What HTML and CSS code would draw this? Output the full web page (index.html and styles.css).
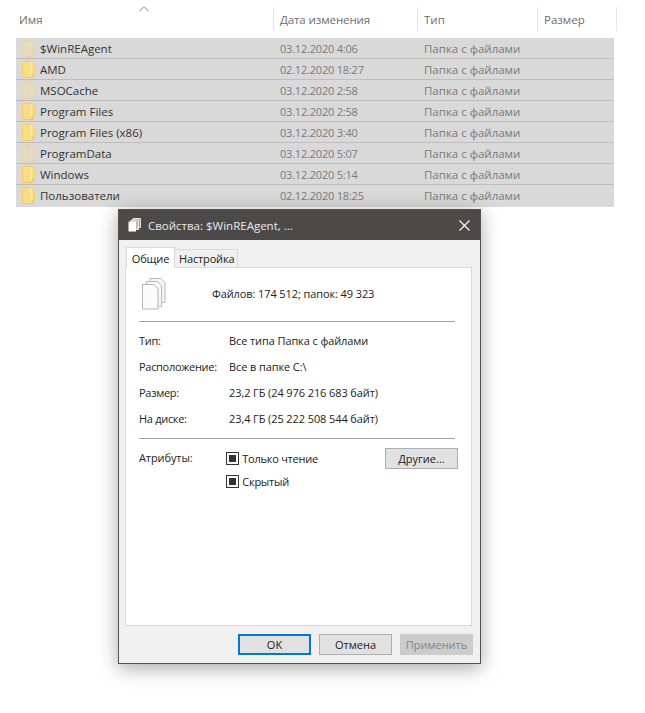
FILE: index.html
```html
<!DOCTYPE html>
<html lang="ru">
<head>
<meta charset="utf-8">
<title>Свойства</title>
<link rel="stylesheet" href="styles.css">
</head>
<body>
<svg class="defs" width="0" height="0" aria-hidden="true">
  <symbol id="folder" viewBox="0 0 13 17">
    <path d="M.5.5h8.500l3.500 2V12l-2 1v3.500H.5z" fill="#fcdc80" stroke="#eccd72"/>
    <path d="M9 .5V13" stroke="#fff0b8" fill="none"/>
    <path d="M10.500 13l2-1v4.500h-2z" fill="#f2cd6a"/>
  </symbol>
</svg>
<main class="explorer">
  <header class="col-head">
    <div class="h-name">Имя
      <svg class="sort" width="10" height="6" viewBox="0 0 10 6"><path d="M.5 5 5 .8 9.500 5" fill="none" stroke="#8a8a8a"/></svg>
    </div>
    <div class="h-date">Дата изменения</div>
    <div class="h-type">Тип</div>
    <div class="h-size">Размер</div>
  </header>
  <div class="rows">
    <div class="row faded"><svg class="ficon"><use href="#folder"/></svg><span class="n">$WinREAgent</span><span class="d">03.12.2020 4:06</span><span class="t">Папка с файлами</span></div>
    <div class="row"><svg class="ficon"><use href="#folder"/></svg><span class="n">AMD</span><span class="d">02.12.2020 18:27</span><span class="t">Папка с файлами</span></div>
    <div class="row faded"><svg class="ficon"><use href="#folder"/></svg><span class="n">MSOCache</span><span class="d">03.12.2020 2:58</span><span class="t">Папка с файлами</span></div>
    <div class="row"><svg class="ficon"><use href="#folder"/></svg><span class="n">Program Files</span><span class="d">03.12.2020 2:58</span><span class="t">Папка с файлами</span></div>
    <div class="row"><svg class="ficon"><use href="#folder"/></svg><span class="n">Program Files (x86)</span><span class="d">03.12.2020 3:40</span><span class="t">Папка с файлами</span></div>
    <div class="row faded"><svg class="ficon"><use href="#folder"/></svg><span class="n">ProgramData</span><span class="d">03.12.2020 5:07</span><span class="t">Папка с файлами</span></div>
    <div class="row"><svg class="ficon"><use href="#folder"/></svg><span class="n">Windows</span><span class="d">03.12.2020 5:14</span><span class="t">Папка с файлами</span></div>
    <div class="row"><svg class="ficon"><use href="#folder"/></svg><span class="n">Пользователи</span><span class="d">02.12.2020 18:25</span><span class="t">Папка с файлами</span></div>
  </div>
</main>

<section class="dialog">
  <div class="titlebar">
    <svg class="ticon" width="13" height="14" viewBox="0 0 13 14">
      <path d="M5 .5h7.500v9H5z" fill="#9a9896" stroke="#e8e8e8"/>
      <path d="M3 2h7.500v9.500H3z" fill="#bdbcbb" stroke="#e8e8e8"/>
      <path d="M.5 3.500h7.500v10H.5z" fill="#fff"/>
    </svg>
    <span class="ttext">Свойства: $WinREAgent, ...</span>
    <svg class="close" width="11" height="11" viewBox="0 0 11 11"><path d="M.5.5l10 10M10.500.5l-10 10" stroke="#fff" stroke-width="1.1"/></svg>
  </div>
  <div class="dbody">
    <div class="tabs">
      <div class="tab active">Общие</div>
      <div class="tab">Настройка</div>
    </div>
    <div class="panel">
      <div class="summary">
        <svg class="bigicon" width="24" height="32" viewBox="0 0 24 32">
          <path d="M8 .5h11l4 4v20H8z" fill="#f4f4f4" stroke="#bbb"/>
          <path d="M4.500 3.500h11l4 4v21h-15z" fill="#f6f6f6" stroke="#bbb"/>
          <path d="M.5 6.500h11l4.500 4.500v20H.5z" fill="#fbfbfb" stroke="#b5b5b5"/>
        </svg>
        <span class="count">Файлов: 174 512; папок: 49 323</span>
      </div>
      <hr class="rule">
      <dl class="props">
        <div class="prop"><dt>Тип:</dt><dd>Все типа Папка с файлами</dd></div>
        <div class="prop"><dt>Расположение:</dt><dd>Все в папке C:\</dd></div>
        <div class="prop"><dt>Размер:</dt><dd>23,2 ГБ (24 976 216 683 байт)</dd></div>
        <div class="prop"><dt>На диске:</dt><dd>23,4 ГБ (25 222 508 544 байт)</dd></div>
      </dl>
      <hr class="rule rule2">
      <div class="attrs">
        <div class="attr-label">Атрибуты:</div>
        <div class="checks">
          <label class="check"><span class="box"></span>Только чтение</label>
          <label class="check"><span class="box"></span>Скрытый</label>
        </div>
        <button class="btn other">Другие...</button>
      </div>
    </div>
    <div class="actions">
      <button class="btn ok">OK</button>
      <button class="btn">Отмена</button>
      <button class="btn disabled">Применить</button>
    </div>
  </div>
</section>
</body>
</html>
```
FILE: styles.css
```css
* { box-sizing: border-box; }
html, body { margin: 0; padding: 0; }
body {
  width: 645px;
  height: 713px;
  background: #fff;
  font-family: "Open Sans", "Noto Sans", sans-serif;
  font-size: 11.5px;
  color: #222;
  position: relative;
  overflow: hidden;
}
.defs { position: absolute; }
.explorer { padding: 7px 0 0 16px; }
.col-head {
  display: flex;
  height: 24px;
  color: #6d6d6d;
  font-size: 11.5px;
}
.col-head > div {
  display: flex;
  align-items: center;
  padding-left: 6px;
  border-right: 1px solid #e4e6e8;
  height: 24px;
  position: relative;
}
.h-name { width: 258px; padding-left: 3px !important; }
.h-date { width: 144px; letter-spacing: -.1px; }
.h-type { width: 120px; }
.h-size { width: 79px; }
.sort { position: absolute; left: 123px; top: -1px; }
.rows { margin-top: 7px; width: 598px; }
.row {
  display: flex;
  align-items: center;
  height: 21px;
  background: #d9d9d9;
  border-bottom: 1px solid #bdbdbd;
  color: #7a7a7a;
  font-size: 11.5px;
}
.row:last-child { height: 22px; border-bottom: 0; padding-bottom: 1px; }
.ficon { width: 13px; height: 17px; margin-left: 6px; flex: none; }
.row.faded .ficon { opacity: .35; }
.n { width: 240px; margin-left: 5px; color: #333; }
.d { width: 144px; font-size: 11px; letter-spacing: -.2px; }
.t { width: 190px; }

.dialog {
  position: absolute;
  left: 118px;
  top: 209px;
  width: 363px;
  height: 455px;
  background: #f0f0f0;
  border: 1px solid #55534f;
  box-shadow: 0 4px 18px rgba(0,0,0,.35);
  display: flex;
  flex-direction: column;
}
.titlebar {
  height: 30px;
  flex: none;
  background: #4c4a48;
  color: #e8e8e8;
  display: flex;
  align-items: center;
  padding: 0 10px;
  font-size: 11.5px;
}
.ticon { margin-right: 7px; margin-left: -1px; }
.ttext { flex: 1; }
.dbody { flex: 1; display: flex; flex-direction: column; padding: 6px 8px 0 6px; position: relative; }
.tabs { display: flex; height: 21px; padding-left: 1px; align-items: flex-end; position: relative; z-index: 1; }
.tab {
  height: 18px;
  padding: 0 4px;
  width: 63px;
  border: 1px solid #d9d9d9;
  border-bottom: 0;
  border-left: 0;
  background: #f0f0f0;
  font-size: 11px;
  display: flex;
  align-items: center;
  letter-spacing: -.15px;
}
.tab.active {
  height: 21px;
  width: 49px;
  background: #fff;
  border-left: 1px solid #d9d9d9;
  justify-content: center;
  margin-bottom: -1px;
}
.panel {
  height: 359px;
  background: #fff;
  border: 1px solid #d9d9d9;
  padding: 10px 16px 0 13px;
  display: flex;
  flex-direction: column;
  font-size: 11px;
  letter-spacing: -.1px;
}
.summary { display: flex; align-items: center; height: 32px; padding-left: 3px; }
.count { margin-left: 46px; position: relative; top: -1px; }
.rule { width: 100%; border: 0; border-top: 1px solid #a0a0a0; margin: 11px 0 0; flex: none; }
.rule2 { margin-top: 7px; }
.props { margin: 5px 0 0; }
.prop { display: flex; align-items: center; height: 26px; margin: 0; }
.prop dt { width: 90px; letter-spacing: -.3px; }
.prop dd { margin: 0; }
.attrs { display: flex; margin-top: 11px; }
.attr-label { width: 88px; }
.checks { display: flex; flex-direction: column; gap: 7px; width: 157px; letter-spacing: -.25px; }
.check { display: flex; align-items: center; height: 16px; }
.box {
  width: 13px; height: 13px; border: 1px solid #333; margin-right: 3px;
  background: #333; box-shadow: inset 0 0 0 2px #fff; flex: none;
}
.btn {
  width: 73px;
  height: 21px;
  flex: none;
  background: #e1e1e1;
  border: 1px solid #adadad;
  font: inherit;
  font-size: 11px;
  color: #222;
  padding: 0;
}
.other { margin: -2px -3px 0 3px; }
.actions { display: flex; justify-content: flex-end; gap: 8px; margin: 8px -1px 0 0; }
.btn.ok { border: 2px solid #0078d7; }
.btn.disabled { background: #cccccc; border-color: #cccccc; color: #858585; }
```
